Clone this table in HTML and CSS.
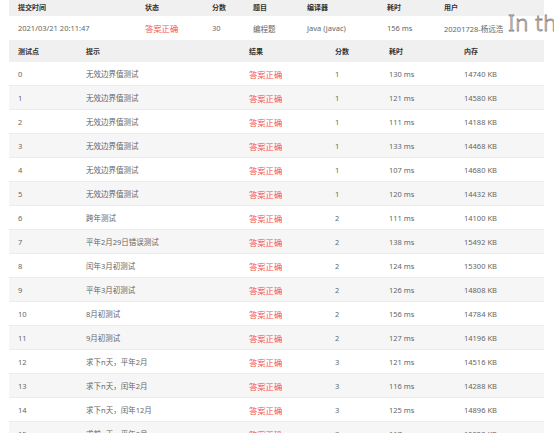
FILE: index.html
```html
<!DOCTYPE html>
<html lang="zh">
<head>
<meta charset="utf-8">
<title>提交详情</title>
<link rel="stylesheet" href="styles.css">
</head>
<body>
<div class="page">
  <div class="grid sub">
    <div class="row head">
      <div class="c">提交时间</div><div class="c">状态</div><div class="c">分数</div><div class="c">题目</div><div class="c">编译器</div><div class="c">耗时</div><div class="c">用户</div>
    </div>
    <div class="row body top">
      <div class="c">2021/03/21 20:11:47</div><div class="c ok">答案正确</div><div class="c">30</div><div class="c">编程题</div><div class="c">Java (javac)</div><div class="c">156 ms</div><div class="c">20201728-杨远浩</div>
    </div>
  </div>
  <div class="grid cases">
    <div class="row head h2">
      <div class="c">测试点</div><div class="c">提示</div><div class="c">结果</div><div class="c">分数</div><div class="c">耗时</div><div class="c">内存</div>
    </div>
    <div class="row body"><div class="c">0</div><div class="c">无效边界值测试</div><div class="c ok">答案正确</div><div class="c">1</div><div class="c">130 ms</div><div class="c">14740 KB</div></div>
    <div class="row body alt"><div class="c">1</div><div class="c">无效边界值测试</div><div class="c ok">答案正确</div><div class="c">1</div><div class="c">121 ms</div><div class="c">14580 KB</div></div>
    <div class="row body"><div class="c">2</div><div class="c">无效边界值测试</div><div class="c ok">答案正确</div><div class="c">1</div><div class="c">111 ms</div><div class="c">14188 KB</div></div>
    <div class="row body alt"><div class="c">3</div><div class="c">无效边界值测试</div><div class="c ok">答案正确</div><div class="c">1</div><div class="c">133 ms</div><div class="c">14468 KB</div></div>
    <div class="row body"><div class="c">4</div><div class="c">无效边界值测试</div><div class="c ok">答案正确</div><div class="c">1</div><div class="c">107 ms</div><div class="c">14680 KB</div></div>
    <div class="row body alt"><div class="c">5</div><div class="c">无效边界值测试</div><div class="c ok">答案正确</div><div class="c">1</div><div class="c">120 ms</div><div class="c">14432 KB</div></div>
    <div class="row body"><div class="c">6</div><div class="c">跨年测试</div><div class="c ok">答案正确</div><div class="c">2</div><div class="c">111 ms</div><div class="c">14100 KB</div></div>
    <div class="row body alt"><div class="c">7</div><div class="c">平年2月29日错误测试</div><div class="c ok">答案正确</div><div class="c">2</div><div class="c">138 ms</div><div class="c">15492 KB</div></div>
    <div class="row body"><div class="c">8</div><div class="c">闰年3月初测试</div><div class="c ok">答案正确</div><div class="c">2</div><div class="c">124 ms</div><div class="c">15300 KB</div></div>
    <div class="row body alt"><div class="c">9</div><div class="c">平年3月初测试</div><div class="c ok">答案正确</div><div class="c">2</div><div class="c">126 ms</div><div class="c">14808 KB</div></div>
    <div class="row body"><div class="c">10</div><div class="c">8月初测试</div><div class="c ok">答案正确</div><div class="c">2</div><div class="c">156 ms</div><div class="c">14784 KB</div></div>
    <div class="row body alt"><div class="c">11</div><div class="c">9月初测试</div><div class="c ok">答案正确</div><div class="c">2</div><div class="c">127 ms</div><div class="c">14196 KB</div></div>
    <div class="row body"><div class="c">12</div><div class="c">求下n天，平年2月</div><div class="c ok">答案正确</div><div class="c">3</div><div class="c">121 ms</div><div class="c">14516 KB</div></div>
    <div class="row body alt"><div class="c">13</div><div class="c">求下n天，闰年2月</div><div class="c ok">答案正确</div><div class="c">3</div><div class="c">116 ms</div><div class="c">14288 KB</div></div>
    <div class="row body"><div class="c">14</div><div class="c">求下n天，闰年12月</div><div class="c ok">答案正确</div><div class="c">3</div><div class="c">125 ms</div><div class="c">14896 KB</div></div>
    <div class="row body alt"><div class="c">15</div><div class="c">求前n天，平年3月</div><div class="c ok">答案正确</div><div class="c">3</div><div class="c">117 ms</div><div class="c">15020 KB</div></div>
    <div class="row body"><div class="c">16</div><div class="c">求前n天，闰年3月</div><div class="c ok">答案正确</div><div class="c">3</div><div class="c">119 ms</div><div class="c">14860 KB</div></div>
  </div>
  <div class="overlay">In thi</div>
</div>
</body>
</html>
```
FILE: styles.css
```css
html, body {
  margin: 0;
  padding: 0;
  background: #fff;
}
body {
  font-family: "Noto Sans", "Noto Sans CJK SC", sans-serif;
  color: #666;
  font-size: 7.5px;
}
.page {
  position: relative;
  padding: 0 10px 0 9px;
  width: 535px;
}
.row {
  display: grid;
  align-items: center;
}
.sub .row {
  grid-template-columns: 127px 67px 41px 54px 80px 57px 109px;
}
.cases .row {
  grid-template-columns: 68px 163px 86px 54px 75px 89px;
}
.c {
  padding-left: 9px;
  white-space: nowrap;
  overflow: visible;
}
.head {
  background: #f0f0f0;
  color: #333;
  font-weight: 700;
  font-size: 7px;
  height: 16px;
  align-items: start;
}
.head .c {
  padding-top: 2px;
}
.h2 {
  height: 22px;
  align-items: center;
}
.h2 .c {
  padding-top: 0;
}
.body {
  height: 23px;
  border-bottom: 1px solid #ececec;
  background: #fff;
}
.body.top {
  height: 24px;
  border-bottom: 0;
}
.body.alt {
  background: #f6f6f6;
}
.ok {
  color: #f55252;
  font-size: 8.3px;
}
.overlay {
  position: absolute;
  left: 508px;
  top: 7px;
  font-family: "Noto Sans", sans-serif;
  font-size: 22px;
  font-weight: 300;
  color: #fff;
  -webkit-text-stroke: 0.8px #888;
  letter-spacing: 0.5px;
  white-space: nowrap;
}
```
